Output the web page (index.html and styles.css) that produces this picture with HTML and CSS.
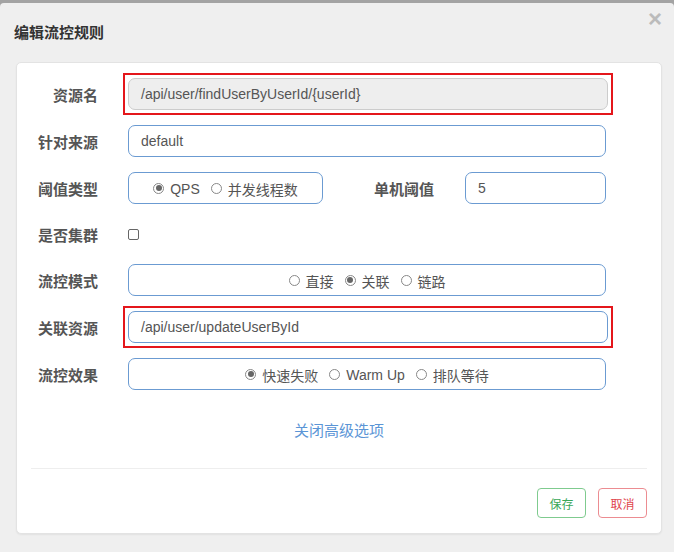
FILE: index.html
```html
<!DOCTYPE html>
<html lang="zh-CN">
<head>
    <meta charset="UTF-8">
    <meta name="viewport" content="width=device-width, initial-scale=1.0">
    <title>编辑流控规则</title>
    <link rel="stylesheet" href="styles.css">
</head>
<body>

    <div class="modal">
        <div class="modal-header">
            <h3 class="modal-title">编辑流控规则</h3>
            <span class="close">&times;</span>
        </div>

        <div class="card">
            <div class="form-row">
                <label class="label">资源名</label>
                <div class="mark">
                    <div class="input disabled">/api/user/findUserByUserId/{userId}</div>
                </div>
            </div>

            <div class="form-row">
                <label class="label">针对来源</label>
                <div class="input">default</div>
            </div>

            <div class="form-row">
                <label class="label">阈值类型</label>
                <div class="split">
                    <div class="radio-box small">
                        <span class="radio checked"></span>QPS
                        <span class="radio"></span>并发线程数
                    </div>
                    <label class="label wide">单机阈值</label>
                    <div class="input grow">5</div>
                </div>
            </div>

            <div class="form-row short">
                <label class="label">是否集群</label>
                <div><span class="checkbox"></span></div>
            </div>

            <div class="form-row">
                <label class="label">流控模式</label>
                <div class="radio-box">
                    <span class="radio"></span>直接
                    <span class="radio checked"></span>关联
                    <span class="radio"></span>链路
                </div>
            </div>

            <div class="form-row">
                <label class="label">关联资源</label>
                <div class="mark">
                    <div class="input">/api/user/updateUserById</div>
                </div>
            </div>

            <div class="form-row">
                <label class="label">流控效果</label>
                <div class="radio-box">
                    <span class="radio checked"></span>快速失败
                    <span class="radio"></span>Warm Up
                    <span class="radio"></span>排队等待
                </div>
            </div>

            <div class="advanced">
                <a href="#">关闭高级选项</a>
            </div>

            <div class="footer">
                <button class="btn save">保存</button>
                <button class="btn cancel">取消</button>
            </div>
        </div>
    </div>

</body>
</html>
```

FILE: styles.css
```css
body {
    margin: 0;
    background-color: #a3a3a3;
    font-family: "Liberation Sans", "Noto Sans CJK SC", sans-serif;
    color: #555;
}
.modal {
    margin-top: 3px;
    height: 549px;
    background-color: #efefef;
    border-radius: 4px 4px 0 0;
    padding: 0 12px 0 16px;
    box-sizing: border-box;
}
.modal-header {
    display: flex;
    justify-content: space-between;
    align-items: flex-start;
    height: 59px;
    margin-left: -2px;
}
.modal-title {
    margin: 18px 0 0;
    font-size: 15px;
    font-weight: bold;
    color: #333;
}
.close {
    margin-top: 2px;
    font-size: 24px;
    font-weight: bold;
    color: #bbb;
    line-height: 28px;
}
.card {
    background-color: white;
    border: 1px solid #e3e3e3;
    border-radius: 5px;
    padding: 15px 55px 15px 0;
    box-shadow: 0 1px 2px rgba(0, 0, 0, 0.06);
}
.form-row {
    display: grid;
    grid-template-columns: 81px 478px;
    column-gap: 30px;
    align-items: center;
    height: 32px;
    margin-bottom: 15px;
}
.form-row.short {
    height: 30px;
}
.label {
    text-align: right;
    font-size: 15px;
    font-weight: bold;
    color: #555;
}
.label.wide {
    width: 122px;
    text-align: center;
    flex-shrink: 0;
}
.input {
    height: 32px;
    box-sizing: border-box;
    border: 1px solid #6b9bd2;
    border-radius: 7px;
    padding: 6px 12px;
    font-size: 14px;
    line-height: 18px;
    color: #555;
    background-color: white;
}
.input.disabled {
    background-color: #eee;
    border-color: #ccc;
}
.input.grow {
    flex: 1;
}
.mark {
    outline: 2px solid #e4161b;
    outline-offset: 3px;
    margin-right: -2px;
}
.split {
    display: flex;
    align-items: center;
}
.radio-box {
    height: 32px;
    box-sizing: border-box;
    border: 1px solid #6b9bd2;
    border-radius: 7px;
    display: flex;
    align-items: center;
    justify-content: center;
    font-size: 14px;
    color: #555;
    padding-top: 2px;
}
.radio-box.small {
    width: 195px;
    flex-shrink: 0;
    margin-right: 20px;
}
.radio {
    display: inline-block;
    width: 11px;
    height: 11px;
    border: 1px solid #888;
    border-radius: 50%;
    box-sizing: border-box;
    margin: 0 6px 0 11px;
    position: relative;
    top: -1px;
}
.radio:first-child {
    margin-left: 0;
}
.radio.checked::after {
    content: "";
    position: absolute;
    left: 1.5px;
    top: 1.5px;
    width: 6px;
    height: 6px;
    border-radius: 50%;
    background-color: #666;
}
.checkbox {
    display: block;
    width: 11px;
    height: 11px;
    border: 1px solid #666;
    border-radius: 2px;
    box-sizing: border-box;
}
.advanced {
    text-align: center;
    margin: 29px 0 0;
    padding-left: 55px;
}
.advanced a {
    font-size: 15px;
    color: #5b95d6;
    text-decoration: none;
}
.footer {
    margin: 28px -41px 0 14px;
    border-top: 1px solid #eee;
    padding-top: 19px;
    display: flex;
    justify-content: flex-end;
    gap: 12px;
}
.btn {
    height: 30px;
    width: 49px;
    padding: 0;
    font-family: inherit;
    font-size: 12px;
    background-color: white;
    border-radius: 4px;
    cursor: pointer;
}
.btn.save {
    border: 1px solid #7fcb8f;
    color: #3aa757;
}
.btn.cancel {
    border: 1px solid #ec8c91;
    color: #e0444c;
}
```
